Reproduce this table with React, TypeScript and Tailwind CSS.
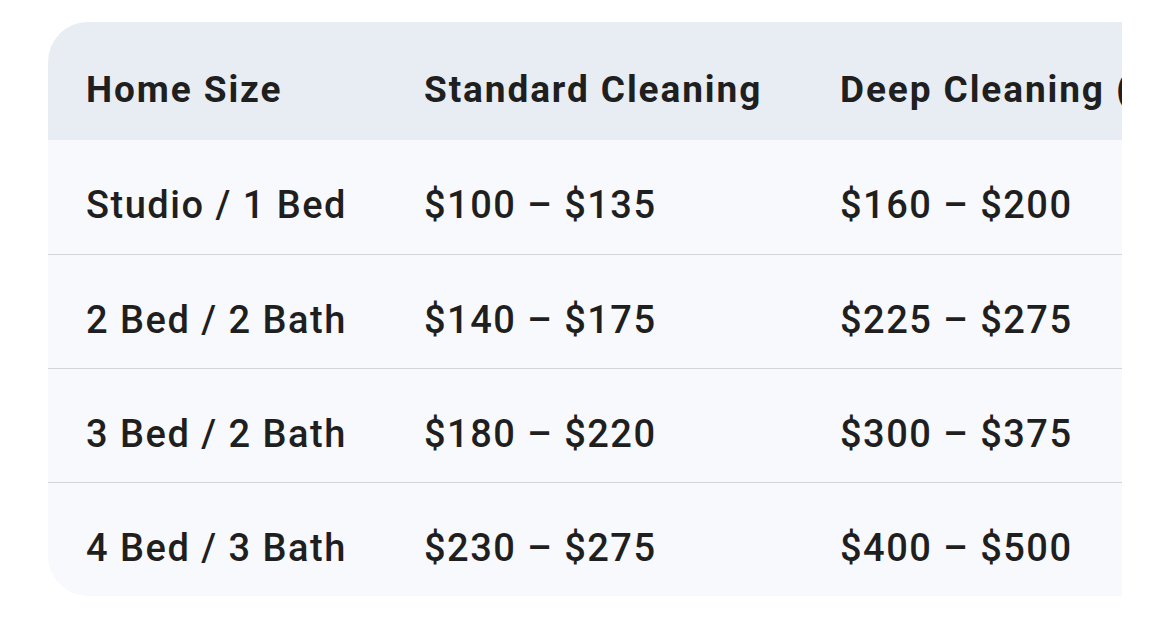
import React from "react";

const rows = [
  ["Studio / 1 Bed", "$100 – $135", "$160 – $200"],
  ["2 Bed / 2 Bath", "$140 – $175", "$225 – $275"],
  ["3 Bed / 2 Bath", "$180 – $220", "$300 – $375"],
  ["4 Bed / 3 Bath", "$230 – $275", "$400 – $500"],
];

export default function App() {
  return (
    <div className="w-[1169px] h-[638px] bg-white pt-[22px] pl-[48px]" style={{ fontFamily: "Roboto, 'Noto Sans', sans-serif" }}>
      <div className="w-[1074px] overflow-hidden rounded-l-[40px] bg-[#f8f9fc] text-[#1f1f1f]">
        <div className="flex h-[118px] items-center pt-[18px] bg-[#e8edf3] text-[37px] font-bold tracking-[1.9px] whitespace-nowrap">
          <div className="w-[338px] shrink-0 pl-[38px]">Home Size</div>
          <div className="w-[416px] shrink-0 pl-[38px]">Standard Cleaning</div>
          <div className="shrink-0 pl-[38px]">Deep Cleaning (Move-in)</div>
        </div>
        {rows.map((r, i) => (
          <div
            key={i}
            className={`flex h-[114px] items-center pt-[17px] text-[38px] font-medium tracking-[1.5px] whitespace-nowrap ${i > 0 ? "border-t border-[#d3d5da]" : ""}`}
          >
            <div className="w-[338px] shrink-0 pl-[38px]">{r[0]}</div>
            <div className="w-[416px] shrink-0 pl-[38px]">{r[1]}</div>
            <div className="shrink-0 pl-[38px]">{r[2]}</div>
          </div>
        ))}
      </div>
    </div>
  );
}
